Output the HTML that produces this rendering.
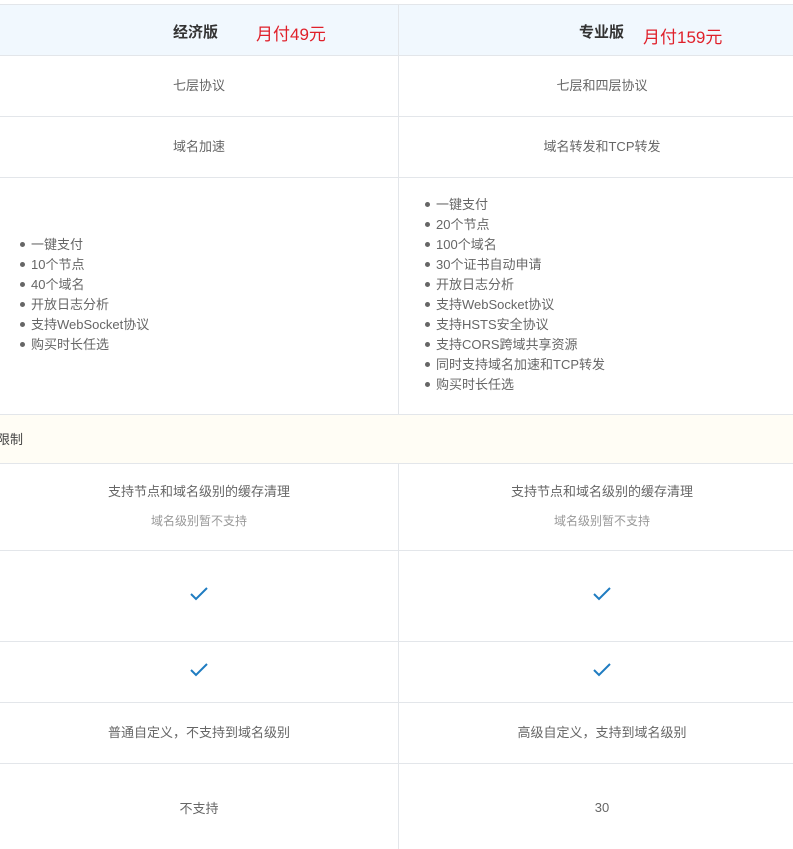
<!DOCTYPE html>
<html><head><meta charset="utf-8"><style>
body{margin:0;width:793px;height:849px;overflow:hidden;background:#fff;font-family:"Liberation Sans","Noto Sans CJK SC",sans-serif;font-size:13px;color:#666;position:relative}
.r{position:absolute;left:0;width:793px;border-bottom:1px solid #e3e6ea;box-sizing:border-box}
.c{position:absolute;top:0;bottom:0;display:flex;flex-direction:column;align-items:center;justify-content:center;text-align:center;padding-bottom:4px}
.l{left:0;width:399px;border-right:1px solid #e3e6ea;box-sizing:border-box}
.rr{left:399px;width:394px;padding-left:12px;box-sizing:border-box}
ul{margin:0;padding:0;list-style:none;position:absolute;line-height:20px;text-align:left;white-space:nowrap}
li:before{content:"";display:inline-block;width:5px;height:5px;border-radius:50%;background:#666;margin:0 6px 2px -11px;vertical-align:middle}
.sub{font-size:12px;color:#999;margin-top:12px}
.ck{width:18px;height:14px}
.h{font-weight:bold;font-size:15px;color:#333}
.p{color:#e0202a;font-size:17px;position:absolute;top:15px}
</style></head><body>
<div class="r" style="top:4px;height:52px;background:#f1f8fe;border-top:1px solid #e3e6ea">
 <div class="c l"><span class="h" style="position:absolute;left:173px;top:16px">经济版</span><span class="p" style="left:256px">月付49元</span></div>
 <div class="c rr" style="padding:0"><span class="h" style="position:absolute;left:180px;top:16px">专业版</span><span class="p" style="left:244px;top:18px">月付159元</span></div>
</div>
<div class="r" style="top:56px;height:61px"><div class="c l">七层协议</div><div class="c rr">七层和四层协议</div></div>
<div class="r" style="top:117px;height:61px"><div class="c l">域名加速</div><div class="c rr">域名转发和TCP转发</div></div>
<div class="r" style="top:178px;height:237px">
 <div class="l" style="position:absolute;top:0;bottom:0"><ul style="left:31px;top:57px"><li>一键支付</li><li>10个节点</li><li>40个域名</li><li>开放日志分析</li><li>支持WebSocket协议</li><li>购买时长任选</li></ul></div>
 <div style="position:absolute;left:399px;top:0;bottom:0;width:394px"><ul style="left:37px;top:17px"><li>一键支付</li><li>20个节点</li><li>100个域名</li><li>30个证书自动申请</li><li>开放日志分析</li><li>支持WebSocket协议</li><li>支持HSTS安全协议</li><li>支持CORS跨域共享资源</li><li>同时支持域名加速和TCP转发</li><li>购买时长任选</li></ul></div>
</div>
<div class="r" style="top:415px;height:49px;background:#fffdf5"><span style="position:absolute;left:-3px;top:14px;color:#444">限制</span></div>
<div class="r" style="top:464px;height:87px"><div class="c l">支持节点和域名级别的缓存清理<div class="sub">域名级别暂不支持</div></div><div class="c rr">支持节点和域名级别的缓存清理<div class="sub">域名级别暂不支持</div></div></div>
<div class="r" style="top:551px;height:91px"><div class="c l"><svg class="ck" viewBox="0 0 18 14"><path d="M1 7l5 5L17 1" fill="none" stroke="#1f7cc1" stroke-width="2"/></svg></div><div class="c rr"><svg class="ck" viewBox="0 0 18 14"><path d="M1 7l5 5L17 1" fill="none" stroke="#1f7cc1" stroke-width="2"/></svg></div></div>
<div class="r" style="top:642px;height:61px"><div class="c l"><svg class="ck" viewBox="0 0 18 14"><path d="M1 7l5 5L17 1" fill="none" stroke="#1f7cc1" stroke-width="2"/></svg></div><div class="c rr"><svg class="ck" viewBox="0 0 18 14"><path d="M1 7l5 5L17 1" fill="none" stroke="#1f7cc1" stroke-width="2"/></svg></div></div>
<div class="r" style="top:703px;height:61px"><div class="c l">普通自定义，不支持到域名级别</div><div class="c rr">高级自定义，支持到域名级别</div></div>
<div class="r" style="top:764px;height:85px;border-bottom:none"><div class="c l" style="padding:2px 0 0">不支持</div><div class="c rr" style="padding-top:2px;padding-bottom:0">30</div></div>
</body></html>
